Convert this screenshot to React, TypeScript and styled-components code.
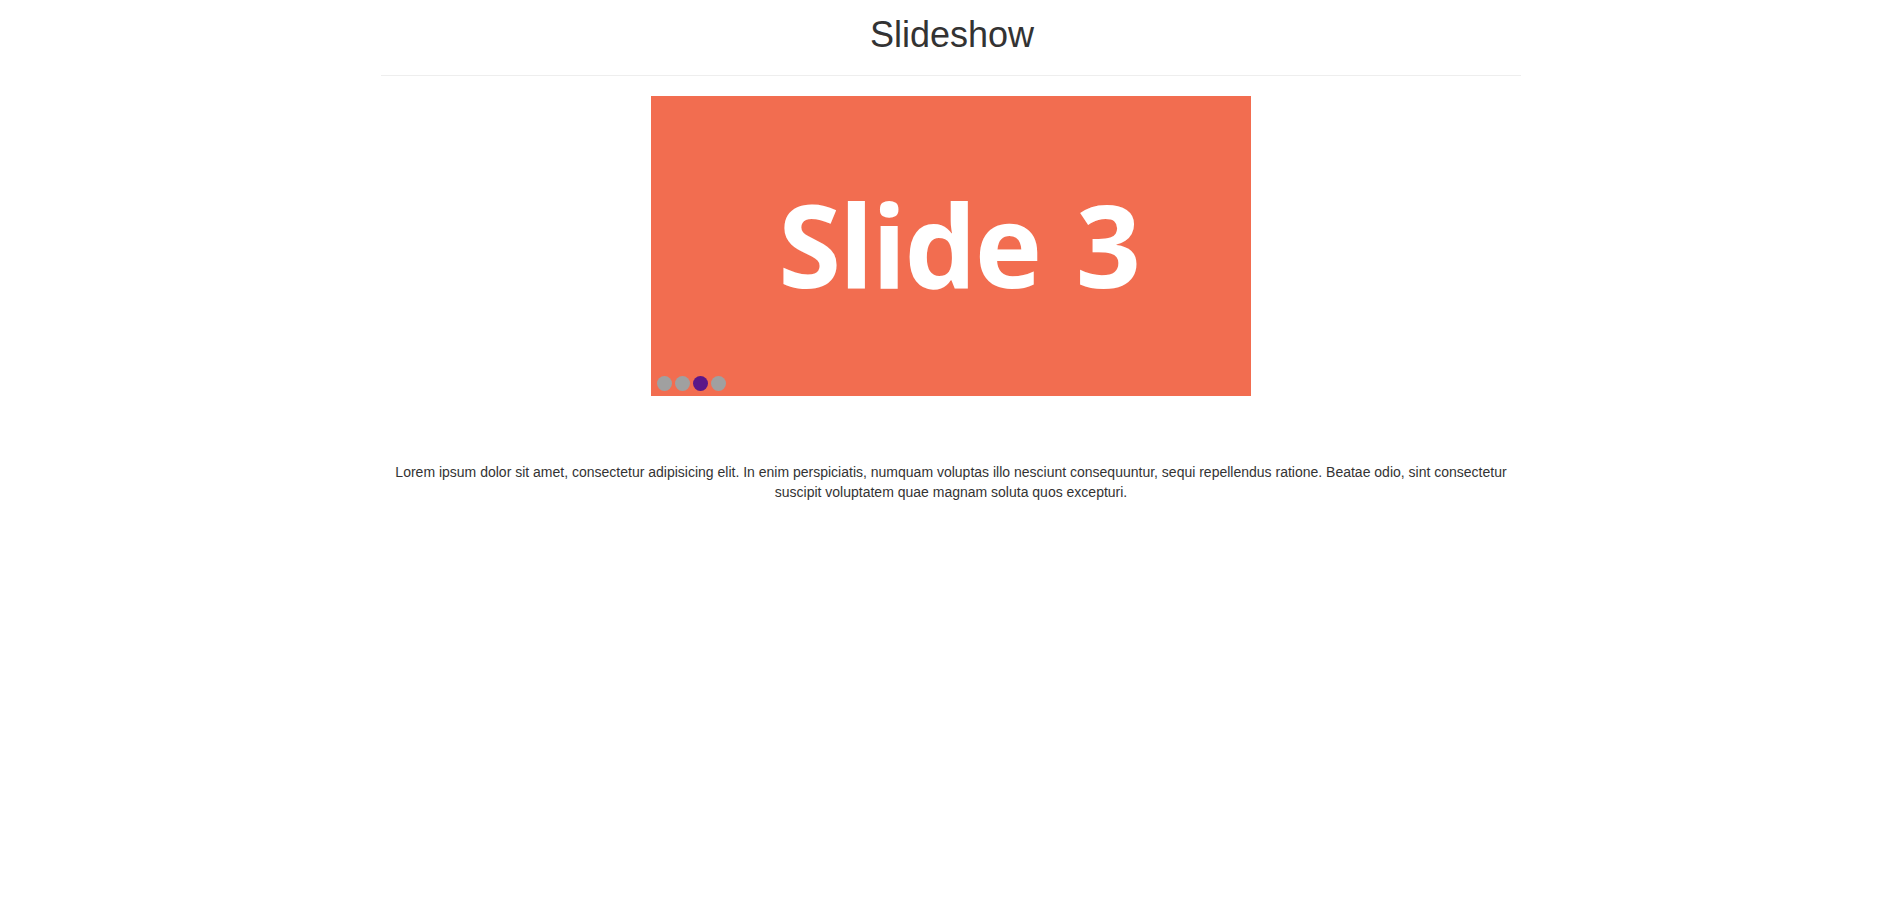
import React from "react";
import styled, { createGlobalStyle } from "styled-components";

const Global = createGlobalStyle`
  html, body { margin: 0; padding: 0; background: #fff; }
  body {
    font-family: "Liberation Sans", Arial, sans-serif;
    font-size: 14px;
    line-height: 1.42857;
    color: #333;
  }
`;

const Container = styled.div`
  width: 1170px;
  margin: 0 auto;
  padding: 0 15px;
  box-sizing: border-box;
  text-align: center;
`;

const Title = styled.h1`
  margin: 15px 0 10px;
  padding-left: 2px;
  font-size: 36px;
  font-weight: 400;
  line-height: 1.1;
  color: #333;
`;

const Rule = styled.hr`
  margin: 20px 0;
  border: 0;
  border-top: 1px solid #eee;
`;

const Slideshow = styled.div`
  position: relative;
  width: 600px;
  height: 300px;
  margin: 0 auto;
  overflow: hidden;
`;

const Slide = styled.div<{ $bg: string }>`
  width: 100%;
  height: 100%;
  background: ${(p) => p.$bg};
  display: flex;
  align-items: center;
  justify-content: center;
  padding-left: 15px;
  box-sizing: border-box;
`;

const SlideText = styled.span`
  font-family: "Open Sans", "Noto Sans", sans-serif;
  font-weight: 700;
  font-size: 114px;
  line-height: 1;
  color: #fff;
  letter-spacing: -2px;
  word-spacing: 8px;
  padding-bottom: 4px;
`;

const Dots = styled.div`
  position: absolute;
  left: 6px;
  bottom: 5px;
  display: flex;
  gap: 3px;
`;

const Dot = styled.span<{ $active?: boolean }>`
  width: 15px;
  height: 15px;
  border-radius: 50%;
  background: ${(p) => (p.$active ? "#5b1788" : "#a0a0a0")};
`;

const Text = styled.p`
  margin: 66px 0 10px;
  font-size: 14px;
  line-height: 20px;
  color: #333;
`;

export default function App() {
  return (
    <>
      <Global />
      <Container>
        <Title>Slideshow</Title>
        <Rule />
        <Slideshow>
          <Slide $bg="#f26d50">
            <SlideText>Slide 3</SlideText>
          </Slide>
          <Dots>
            <Dot />
            <Dot />
            <Dot $active />
            <Dot />
          </Dots>
        </Slideshow>
        <Text>
          Lorem ipsum dolor sit amet, consectetur adipisicing elit. In enim perspiciatis, numquam voluptas illo nesciunt consequuntur, sequi repellendus ratione. Beatae odio, sint consectetur suscipit voluptatem quae magnam soluta quos excepturi.
        </Text>
      </Container>
    </>
  );
}
